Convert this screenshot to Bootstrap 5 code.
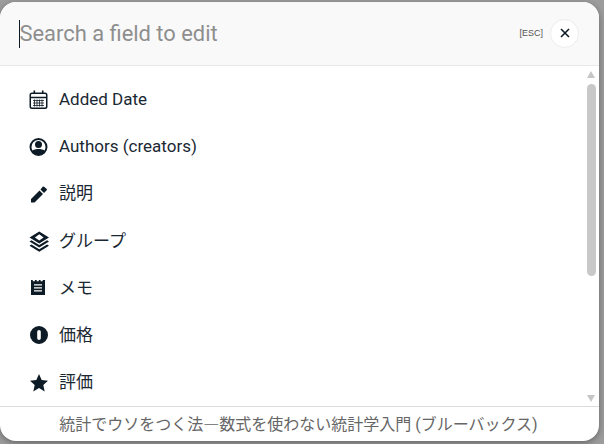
<!DOCTYPE html>
<html lang="ja">
<head>
    <meta charset="UTF-8">
    <meta name="viewport" content="width=device-width, initial-scale=1.0">
    <title>Edit field</title>
    <link href="https://cdn.jsdelivr.net/npm/bootstrap@5.3.0/dist/css/bootstrap.min.css" rel="stylesheet">
    <style>
        html, body {
            height: 100%;
        }
        body {
            background: #9c9c9c;
            overflow: hidden;
            padding: 2px 5px 3px 0;
            font-family: Roboto, "Noto Sans CJK JP", sans-serif;
            color: #0d1b26;
        }
        .picker {
            height: 100%;
            border: none;
            border-radius: 16px;
            overflow: hidden;
            box-shadow: 0 2px 6px rgba(0, 0, 0, 0.35);
        }
        .picker-head {
            height: 64px;
            background: #f9f9f9;
            border-bottom: 1px solid #e8e8e8;
            padding: 0 20px 0 19px;
        }
        .search-input {
            font-size: 21.9px;
            line-height: 28px;
            padding: 0;
            border: 0;
            outline: 0;
            background: transparent;
            color: #0d1b26;
            box-shadow: -1px 0 0 #0d1b26;
            margin-left: 0.5px;
            margin-top: 2px;
        }
        .search-input::placeholder {
            color: #8e8e8e;
            opacity: 1;
        }
        .esc-hint {
            font-family: "Liberation Sans", sans-serif;
            font-size: 9px;
            color: #555;
            margin-right: 7px;
        }
        .close-round {
            width: 29px;
            height: 29px;
            padding: 0;
            border-radius: 50%;
            background: #fff;
            border: 1px solid #ececec;
            color: #0d1b26;
        }
        .field-row {
            height: 47.2px;
            padding: 0 0 0 28px;
            gap: 9px;
            border: 0;
            font-size: 17px;
            color: #1a2833;
        }
        .field-row svg {
            width: 22px;
            height: 22px;
            flex: none;
            fill: #0d1b26;
        }
        .field-list {
            padding-top: 10.65px;
        }
        .scroll-lane {
            width: 9px;
            box-sizing: content-box;
            flex: none;
            padding: 5px 3px 4px 0;
        }
        .scroll-up, .scroll-down {
            flex: none;
            width: 0;
            height: 0;
            border-left: 4.5px solid transparent;
            border-right: 4.5px solid transparent;
        }
        .scroll-up {
            border-bottom: 7px solid #c6c6c6;
        }
        .scroll-down {
            border-top: 7px solid #c6c6c6;
        }
        .scroll-thumb {
            height: 192px;
            margin-top: 6px;
            border-radius: 5px;
            background: #c8c8c8;
        }
        .picker-foot {
            height: 35px;
            border-top: 1px solid #dcdcdc;
            padding-right: 2px;
            font-size: 16px;
            color: #666;
        }
        .wide-dash {
            font-family: "Noto Sans CJK JP", sans-serif;
        }
    </style>
</head>
<body>
    <div class="card picker d-flex flex-column">
        <div class="picker-head d-flex align-items-center flex-none">
            <input class="search-input flex-grow-1" type="text" placeholder="Search a field to edit">
            <span class="esc-hint">[ESC]</span>
            <button class="close-round d-flex align-items-center justify-content-center" type="button" aria-label="Close">
                <svg width="10" height="10" viewBox="0 0 10 10"><path d="M1 1l8 8M9 1l-8 8" stroke="#0d1b26" stroke-width="1.6" fill="none"/></svg>
            </button>
        </div>
        <div class="d-flex flex-grow-1 overflow-hidden">
            <div class="list-group list-group-flush field-list flex-grow-1">
                <div class="list-group-item field-row d-flex align-items-center">
                    <svg viewBox="0 0 22 22"><path fill-rule="evenodd" d="M5.500 1.500h1.600V3.500h6.800V1.500h1.600V3.500h1.500a2.500 2.500 0 0 1 2.500 2.500v11.500a2.500 2.500 0 0 1-2.500 2.500H4a2.500 2.500 0 0 1-2.500-2.500V6A2.500 2.500 0 0 1 4 3.500h1.500zM4 5a1 1 0 0 0-1 1v1.800h15V6a1 1 0 0 0-1-1zM3 9.300v8.200a1 1 0 0 0 1 1h13a1 1 0 0 0 1-1V9.300z"/><path d="M5 11.500h11M5 14h11M5 16.500h11M6.500 10.500v7M9 10.500v7M11.500 10.500v7M14 10.500v7" stroke="#0d1b26" stroke-width="0.8" fill="none"/></svg>
                    <span>Added Date</span>
                </div>
                <div class="list-group-item field-row d-flex align-items-center">
                    <svg viewBox="0 0 22 22"><path fill-rule="evenodd" d="M10.500 2a9 9 0 1 1 0 18 9 9 0 0 1 0-18zm0 2a7 7 0 0 0-7 7c0 1.300.3 2.400.9 3.400 1.600-1 3.700-1.500 6.100-1.500s4.500.5 6.100 1.500c.6-1 .9-2.100.9-3.400a7 7 0 0 0-7-7zM10.500 5a3.500 3.500 0 1 1 0 7 3.500 3.500 0 0 1 0-7z"/></svg>
                    <span>Authors (creators)</span>
                </div>
                <div class="list-group-item field-row d-flex align-items-center">
                    <svg viewBox="0 0 22 22"><path d="M3 16v3.500h3.500L15 11l-3.500-3.500zM18.700 7.300a1 1 0 0 0 0-1.400l-2.600-2.100a1 1 0 0 0-1.400 0l-2.200 2.700 3.500 3.500z"/></svg>
                    <span>説明</span>
                </div>
                <div class="list-group-item field-row d-flex align-items-center">
                    <svg viewBox="0 0 22 22"><path fill-rule="evenodd" d="M11.250 1.500 1.500 7.500l9.750 6 9.750-6zM11.250 4.300 15.600 7.500l-4.350 3.100L6.900 7.500z"/><path d="M3.400 10.300 1.500 11.500l9.750 6 9.750-6-1.900-1.200-7.850 4.800zM3.400 14.500 1.500 15.700l9.750 6 9.750-6-1.900-1.200-7.850 4.800z"/></svg>
                    <span>グループ</span>
                </div>
                <div class="list-group-item field-row d-flex align-items-center">
                    <svg viewBox="0 0 22 22"><path fill-rule="evenodd" d="M3 3h1.800v1.200h2.100V3h1.800v1.200h2.100V3h1.800v1.200h2.100V3H17v15H3zM6 7.300v1.300h8V7.300zM6 10.300v1.300h8v-1.300zM6 13.300v1.300h8v-1.300z"/></svg>
                    <span>メモ</span>
                </div>
                <div class="list-group-item field-row d-flex align-items-center">
                    <svg viewBox="0 0 22 22"><path fill-rule="evenodd" d="M11 2a9 9 0 1 1 0 18 9 9 0 0 1 0-18zM11 6a1.800 1.800 0 0 0-1.800 1.800v6.400a1.800 1.800 0 0 0 3.600 0V7.800A1.800 1.800 0 0 0 11 6z"/></svg>
                    <span>価格</span>
                </div>
                <div class="list-group-item field-row d-flex align-items-center">
                    <svg viewBox="0 0 22 22"><path d="M11 2l2.700 6.100 6.300.6-4.700 4.200 1.400 6.500-5.700-3.400-5.700 3.400 1.400-6.500L2 8.700l6.300-.6z"/></svg>
                    <span>評価</span>
                </div>
            </div>
            <div class="scroll-lane d-flex flex-column">
                <div class="scroll-up"></div>
                <div class="scroll-thumb"></div>
                <div class="flex-grow-1"></div>
                <div class="scroll-down"></div>
            </div>
        </div>
        <div class="picker-foot d-flex align-items-center justify-content-center flex-none"><span>統計でウソをつく法<span class="wide-dash">―</span>数式を使わない統計学入門 (ブルーバックス)</span></div>
    </div>

    <script src="https://cdn.jsdelivr.net/npm/bootstrap@5.3.0/dist/js/bootstrap.bundle.min.js"></script>
</body>
</html>
